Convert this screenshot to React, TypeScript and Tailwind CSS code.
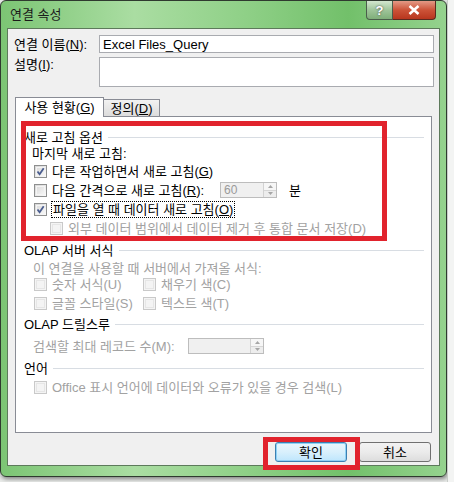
import React from "react";

const FONT = { fontFamily: '"Liberation Sans", "Noto Sans CJK KR", sans-serif' };

function Check({ checked = false, disabled = false }: { checked?: boolean; disabled?: boolean }) {
  return (
    <span
      className={`relative inline-block h-[13px] w-[13px] shrink-0 border ${
        disabled ? "border-[#c9c9c9] bg-[#f4f4f4]" : "border-[#8e8f8f] bg-[linear-gradient(135deg,#d6d6d6,#fbfbfb)]"
      }`}
    >
      <span
        className={`absolute inset-[1px] border ${disabled ? "border-[#e6e6e6]" : "border-[#f4f4f4]"}`}
      />
      {checked && (
        <svg viewBox="0 0 11 11" className="absolute inset-0 h-[11px] w-[11px]">
          <path d="M2.5 5.5 L4.6 8.2 L8.7 2.2" fill="none" stroke="#4a5d8f" strokeWidth="1.8" />
        </svg>
      )}
    </span>
  );
}

function Spin({ value, width }: { value?: string; width: number }) {
  return (
    <div className="flex h-[16px] border border-[#bdbdbd] bg-[#f0f0f0]" style={{ width }}>
      <div className="flex flex-1 items-center pl-[3px] text-[12px] leading-none text-[#9a9a9a]">{value}</div>
      <div className="flex w-[13px] flex-col border-l border-[#d2d2d2]">
        <div className="flex flex-1 items-center justify-center border-b border-[#d6d6d6] bg-[#f6f6f6]">
          <svg width="5" height="3" viewBox="0 0 5 3"><path d="M0 3 L2.5 0 L5 3Z" fill="#a6a6a6" /></svg>
        </div>
        <div className="flex flex-1 items-center justify-center bg-[#ededed]">
          <svg width="5" height="3" viewBox="0 0 5 3"><path d="M0 0 L2.5 3 L5 0Z" fill="#a6a6a6" /></svg>
        </div>
      </div>
    </div>
  );
}

function GroupTitle({ children, mt }: { children: React.ReactNode; mt: string }) {
  return (
    <div className={`flex h-[16px] items-center pl-[8px] pr-[7px] ${mt}`}>
      <span className="whitespace-nowrap">{children}</span>
      <span className="ml-[5px] h-px flex-1 bg-[#d8dde3]" />
    </div>
  );
}

export default function App() {
  return (
    <div className="relative flex h-[482px] w-[454px] overflow-hidden bg-[#e9ebe9] text-[13px] leading-none text-black" style={FONT}>
      {/* window */}
      <div className="flex h-[477px] w-[447px] shrink-0 flex-col rounded-[6px] border border-[#2f3a2f] bg-[linear-gradient(90deg,#7cc574,#aadda2_30%,#8fd087_55%,#72c06a_78%,#95d28e)] shadow-[1px_2px_4px_rgba(0,0,0,0.45)]">
        {/* title bar */}
        <div className="flex h-[27px] shrink-0 items-start justify-between">
          <div className="pl-[9px] pt-[7px] text-[13px] text-[#1b1b1b]">연결 속성</div>
          <div className="mr-[10px] flex">
            <div className="flex h-[19px] w-[27px] items-center justify-center rounded-bl-[4px] border border-t-0 border-[#4b5d4b] bg-[linear-gradient(180deg,#d3e6cf,#9fc59a_50%,#7fae79)] text-[13px] font-bold text-white [text-shadow:0_0_2px_#333]">
              ?
            </div>
            <div className="flex h-[19px] w-[43px] items-center justify-center rounded-br-[4px] border border-l-0 border-t-0 border-[#5b2a20] bg-[linear-gradient(180deg,#e39a86,#cc5338_50%,#b8361e)]">
              <svg width="12" height="10" viewBox="0 0 12 10">
                <path d="M1.5 1 L10.5 9 M10.5 1 L1.5 9" stroke="white" strokeWidth="2.6" />
              </svg>
            </div>
          </div>
        </div>

        {/* client area */}
        <div className="mx-[6px] flex h-[438px] flex-col border border-[#5d7a5b] bg-[#f0f0f0]">
          <div className="mt-[6px] flex h-[18px] items-center">
            <div className="w-[91px] pl-[6px]">
              연결 이름(<span className="underline">N</span>):
            </div>
            <div className="flex h-[18px] w-[335px] items-center border border-[#a9abb0] bg-white pl-[3px] text-[13px]">
              Excel Files_Query
            </div>
          </div>
          <div className="mt-[4px] flex">
            <div className="w-[91px] pl-[6px] pt-[1px]">
              설명(<span className="underline">I</span>):
            </div>
            <div className="h-[30px] w-[335px] border border-[#a9abb0] bg-white" />
          </div>

          {/* tabs */}
          <div className="mt-[10px] flex h-[19px] items-end pl-[7px]">
            <div className="relative z-10 -mb-px flex h-[20px] w-[89px] items-center justify-center border border-b-0 border-[#898c95] bg-white">
              사용 현황(<span className="underline">G</span>)
            </div>
            <div className="flex h-[17px] w-[56px] items-center justify-center border border-b-0 border-l-0 border-[#898c95] bg-[linear-gradient(180deg,#f2f2f2,#dcdcdc)]">
              정의(<span className="underline">D</span>)
            </div>
          </div>

          {/* panel */}
          <div className="ml-[7px] flex h-[317px] w-[417px] flex-col border border-[#898c95] bg-white">
            <GroupTitle mt="mt-[12px]">새로 고침 옵션</GroupTitle>
            <div className="flex h-[16px] items-center pl-[16px]">마지막 새로 고침:</div>
            <div className="mt-[2px] flex h-[16px] items-center gap-[5px] pl-[18px]">
              <Check checked />
              <span>
                다른 작업하면서 새로 고침(<span className="underline">G</span>)
              </span>
            </div>
            <div className="mt-[3px] flex h-[16px] items-center pl-[18px]">
              <Check />
              <span className="ml-[5px] w-[168px]">
                다음 간격으로 새로 고침(<span className="underline">R</span>):
              </span>
              <Spin value="60" width={57} />
              <span className="ml-[12px]">분</span>
            </div>
            <div className="mt-[3px] flex h-[16px] items-center gap-[4px] pl-[18px]">
              <Check checked />
              <span className="border border-dotted border-black px-px py-px">
                파일을 열 때 데이터 새로 고침(<span className="underline">O</span>)
              </span>
            </div>
            <div className="mt-[3px] flex h-[16px] items-center gap-[5px] pl-[34px] text-[#a2a2a2]">
              <Check disabled />
              <span>외부 데이터 범위에서 데이터 제거 후 통합 문서 저장(D)</span>
            </div>

            <GroupTitle mt="mt-[6px]">OLAP 서버 서식</GroupTitle>
            <div className="mt-[2px] flex h-[16px] items-center pl-[17px] text-[#a2a2a2]">
              이 연결을 사용할 때 서버에서 가져올 서식:
            </div>
            <div className="flex h-[16px] items-center pl-[18px] text-[#a2a2a2]">
              <div className="flex w-[109px] items-center gap-[5px]">
                <Check disabled />
                <span>숫자 서식(U)</span>
              </div>
              <div className="flex items-center gap-[5px]">
                <Check disabled />
                <span>채우기 색(C)</span>
              </div>
            </div>
            <div className="mt-[3px] flex h-[16px] items-center pl-[18px] text-[#a2a2a2]">
              <div className="flex w-[109px] items-center gap-[5px]">
                <Check disabled />
                <span>글꼴 스타일(S)</span>
              </div>
              <div className="flex items-center gap-[5px]">
                <Check disabled />
                <span>텍스트 색(T)</span>
              </div>
            </div>

            <GroupTitle mt="mt-[5px]">OLAP 드릴스루</GroupTitle>
            <div className="mt-[6px] flex h-[16px] items-center pl-[17px] text-[#a2a2a2]">
              <span className="w-[155px]">검색할 최대 레코드 수(M):</span>
              <Spin width={76} />
            </div>

            <GroupTitle mt="mt-[6px]">언어</GroupTitle>
            <div className="mt-[3px] flex h-[16px] items-center gap-[5px] pl-[18px] text-[#a2a2a2]">
              <Check disabled />
              <span>Office 표시 언어에 데이터와 오류가 있을 경우 검색(L)</span>
            </div>
          </div>

          {/* buttons */}
          <div className="mt-[9px] flex justify-end gap-[12px] pr-[8px]">
            <div className="flex h-[20px] w-[72px] items-center justify-center rounded-[3px] border border-[#3c7fb1] bg-[linear-gradient(180deg,#eaf6fd,#d9f0fc_50%,#bee6fd)] shadow-[inset_0_0_0_1px_#8fd1f5]">
              확인
            </div>
            <div className="flex h-[20px] w-[72px] items-center justify-center rounded-[3px] border border-[#707070] bg-[linear-gradient(180deg,#f2f2f2,#ebebeb_50%,#dddddd)]">
              취소
            </div>
          </div>
        </div>
      </div>

      {/* excel background strip */}
      <div className="flex-1 border-l border-[#c9cdc9] bg-[#f3f4f3]" />

      {/* red annotation boxes */}
      <div className="pointer-events-none absolute left-[21px] top-[121px] h-[120px] w-[366px] border-[5px] border-[#e1232d]" />
      <div className="pointer-events-none absolute left-[263px] top-[437px] h-[33px] w-[97px] border-[5px] border-[#e1232d]" />
    </div>
  );
}
